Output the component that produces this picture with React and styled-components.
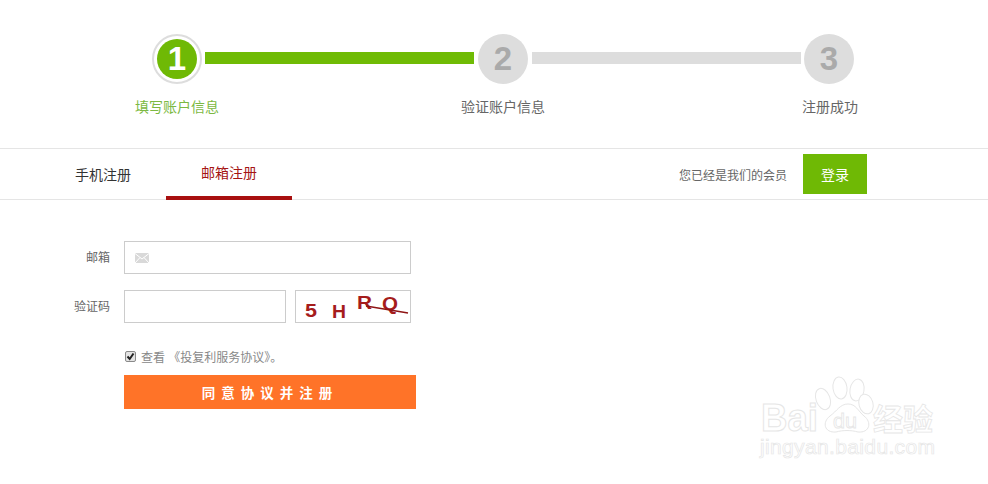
import React from 'react'
import styled, { createGlobalStyle } from 'styled-components'

const GlobalStyle = createGlobalStyle`
    html, body {
        margin: 0;
        padding: 0;
        background: #fff;
        font-family: "Liberation Sans", "Noto Sans CJK SC", sans-serif;
    }
`

const Page = styled.div`
    position: relative;
    width: 988px;
    height: 484px;
    overflow: hidden;
    background: #fff;
`

const Stepper = styled.div`
    display: flex;
    align-items: center;
    padding: 34px 0 0 152px;
`

const Circle = styled.div`
    width: 50px;
    height: 50px;
    flex: none;
    box-sizing: border-box;
    border-radius: 50%;
    display: flex;
    align-items: center;
    justify-content: center;
    font-size: 33px;
    font-weight: 700;
    color: #aaa;
    background: #ddd;
`

const ActiveCircle = styled(Circle)`
    background: #fff;
    border: 2px solid #ddd;
    color: #fff;
    span {
        width: 40px;
        height: 40px;
        border-radius: 50%;
        background: #6fb905;
        display: flex;
        align-items: center;
        justify-content: center;
    }
`

const Bar = styled.div`
    width: ${p => p.$width}px;
    height: 12px;
    flex: none;
    margin: 0 ${p => p.$right}px 2px ${p => p.$left}px;
    background: ${p => (p.$done ? '#6fbb05' : '#ddd')};
`

const StepLabels = styled.div`
    display: flex;
    padding: 13px 0 0 135px;
`

const StepLabel = styled.div`
    margin-left: ${p => p.$offset || 0}px;
    font-size: 14px;
    line-height: 20px;
    white-space: nowrap;
    color: ${p => (p.$active ? '#7cb942' : '#666')};
`

const TabBar = styled.div`
    display: flex;
    align-items: center;
    height: 52px;
    box-sizing: border-box;
    margin-top: 31px;
    padding: 0 121px 0 40px;
    border-top: 1px solid #e5e5e5;
    border-bottom: 1px solid #e5e5e5;
`

const Tab = styled.div`
    align-self: flex-start;
    width: 126px;
    height: 51px;
    box-sizing: border-box;
    padding-bottom: 2px;
    display: flex;
    align-items: center;
    justify-content: center;
    font-size: 14px;
    color: ${p => (p.$active ? '#a51414' : '#333')};
    border-bottom: ${p => (p.$active ? '4px solid #a81010' : 'none')};
`

const Member = styled.div`
    display: flex;
    align-items: center;
    gap: 16px;
    margin-left: auto;
    font-size: 12px;
    color: #666;
`

const LoginButton = styled.button`
    width: 64px;
    height: 40px;
    border: 0;
    padding: 0;
    background: #6fb905;
    color: #fff;
    font-family: inherit;
    font-size: 14px;
`

const Form = styled.form`
    display: flex;
    flex-direction: column;
    gap: 16px;
    padding-top: 41px;
`

const Row = styled.div`
    display: flex;
    align-items: center;
`

const FieldLabel = styled.label`
    width: 110px;
    margin-right: 14px;
    padding-bottom: 2px;
    text-align: right;
    font-size: 12px;
    color: #666;
`

const Field = styled.div`
    display: flex;
    align-items: center;
    width: ${p => p.$width}px;
    height: 33px;
    box-sizing: border-box;
    padding-left: 10px;
    border: 1px solid #ccc;
    background: #fff;
`

const CaptchaBox = styled.div`
    width: 116px;
    height: 33px;
    box-sizing: border-box;
    margin-left: 9px;
    border: 1px solid #ccc;
    svg {
        display: block;
    }
`

const Agreement = styled.div`
    display: flex;
    align-items: center;
    height: 16px;
    margin: 9px 0 0 125px;
    font-size: 12px;
    color: #888;
`

const CheckBox = styled.span`
    width: 11px;
    height: 11px;
    box-sizing: border-box;
    margin: 1px 5px 0 0;
    border: 1px solid #8a8a8a;
    border-radius: 2px;
    background: #e4e4e4;
    display: flex;
    svg {
        display: block;
    }
`

const SubmitButton = styled.button`
    width: 292px;
    height: 34px;
    margin: -5px 0 0 124px;
    border: 0;
    padding: 0;
    background: #ff7328;
    color: #fff;
    font-family: inherit;
    font-size: 13.5px;
    font-weight: 700;
    letter-spacing: 6px;
`

const Watermark = styled.svg`
    position: absolute;
    left: 740px;
    top: 370px;
    fill: #fff;
    stroke: #e6e6e6;
    text {
        font-family: "Liberation Sans", "Noto Sans CJK SC", sans-serif;
    }
`

const MailIcon = () => (
    <svg width="14" height="10" viewBox="0 0 14 10">
        <rect width="14" height="10" fill="#d9d9d9" />
        <path d="M0 .5 7 6l7-5.500M0 10l5-5.500M14 10 9 4.500" fill="none" stroke="#fff" strokeWidth="1" />
    </svg>
)

const App = () => {
    return (
        <Page>
            <GlobalStyle />
            <Stepper>
                <ActiveCircle><span>1</span></ActiveCircle>
                <Bar $done $width={269} $left={3} $right={4} />
                <Circle>2</Circle>
                <Bar $width={269} $left={4} $right={3} />
                <Circle>3</Circle>
            </Stepper>
            <StepLabels>
                <StepLabel $active>填写账户信息</StepLabel>
                <StepLabel $offset={242}>验证账户信息</StepLabel>
                <StepLabel $offset={257}>注册成功</StepLabel>
            </StepLabels>
            <TabBar>
                <Tab>手机注册</Tab>
                <Tab $active>邮箱注册</Tab>
                <Member>
                    您已经是我们的会员
                    <LoginButton type="button">登录</LoginButton>
                </Member>
            </TabBar>
            <Form>
                <Row>
                    <FieldLabel>邮箱</FieldLabel>
                    <Field $width={287}><MailIcon /></Field>
                </Row>
                <Row>
                    <FieldLabel>验证码</FieldLabel>
                    <Field $width={162} />
                    <CaptchaBox>
                        <svg width="114" height="31" viewBox="0 0 114 31" fill="#a51c1c" fontFamily="Liberation Sans" fontWeight="700">
                            <text x="9" y="26" fontSize="18" textLength="12" lengthAdjust="spacingAndGlyphs">5</text>
                            <text x="36" y="27" fontSize="18" textLength="14" lengthAdjust="spacingAndGlyphs">H</text>
                            <text x="61" y="18" fontSize="18" textLength="15" lengthAdjust="spacingAndGlyphs">R</text>
                            <text x="86" y="19" fontSize="19" textLength="16" lengthAdjust="spacingAndGlyphs">Q</text>
                            <path d="M70 15 112 22" stroke="#8f1515" strokeWidth="1.400" />
                        </svg>
                    </CaptchaBox>
                </Row>
                <Agreement>
                    <CheckBox>
                        <svg width="9" height="9" viewBox="0 0 9 9">
                            <path d="M1.500 4.500 3.700 7 7.500 1.500" fill="none" stroke="#222" strokeWidth="2" />
                        </svg>
                    </CheckBox>
                    查看 《投复利服务协议》。
                </Agreement>
                <SubmitButton type="button">同意协议并注册</SubmitButton>
            </Form>
            <Watermark width="210" height="100" viewBox="0 0 210 100">
                <ellipse cx="83" cy="29" rx="7" ry="11" transform="rotate(-20 83 29)" />
                <ellipse cx="100" cy="18" rx="7" ry="11" transform="rotate(-8 100 18)" />
                <ellipse cx="117" cy="20" rx="7" ry="11" transform="rotate(10 117 20)" />
                <ellipse cx="126" cy="34" rx="7" ry="10" transform="rotate(-15 126 34)" />
                <path d="M96 62C84 63 82 52 90 46 97 41 100 34 108 34 116 34 118 41 124 46 132 52 130 63 118 62 111 60 103 60 96 62Z" />
                <text x="21" y="61" fontSize="38" fontWeight="700" strokeWidth="1" textLength="57" lengthAdjust="spacingAndGlyphs">Bai</text>
                <text x="93" y="58" fontSize="21" strokeWidth="0.800" textLength="24" lengthAdjust="spacingAndGlyphs">du</text>
                <text x="133" y="60" fontSize="30" strokeWidth="0.800" fontWeight="700">经验</text>
                <text x="20" y="84" fontSize="21" strokeWidth="0.700" textLength="175">jingyan.baidu.com</text>
            </Watermark>
        </Page>
    )
}

export default App
